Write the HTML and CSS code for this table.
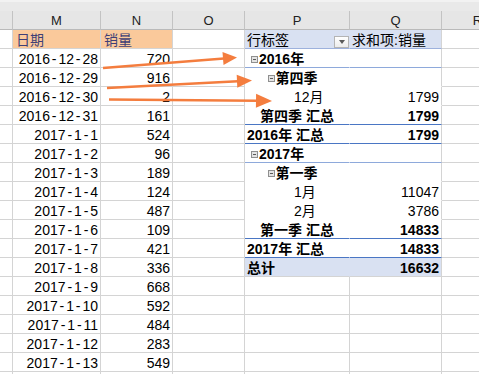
FILE: index.html
```html
<!DOCTYPE html>
<html lang="zh">
<head>
<meta charset="utf-8">
<title>数据透视表</title>
<link rel="stylesheet" href="styles.css">
</head>
<body>
<div class="sheet">
  <div class="top"></div>

  <div class="col"></div><div class="col">M</div><div class="col">N</div><div class="col">O</div><div class="col">P</div><div class="col">Q</div><div class="col">R</div>

  <div class="c"></div><div class="c in">日期</div><div class="c in">销量</div><div class="c"></div>
  <div class="c pp hdr flexcell"><span>行标签</span><span class="dd"><span class="tri"></span></span></div><div class="c pq hdr">求和项:销量</div><div class="c"></div>

  <div class="c"></div><div class="c r">2016<span class="h">-</span>12<span class="h">-</span>28</div><div class="c r">720</div><div class="c"></div>
  <div class="c pp l1 b lv1"><span class="ex"></span>2016年</div><div class="c pq l1"></div><div class="c"></div>

  <div class="c"></div><div class="c r">2016<span class="h">-</span>12<span class="h">-</span>29</div><div class="c r">916</div><div class="c"></div>
  <div class="c pp b lv2"><span class="ex"></span>第四季</div><div class="c pq"></div><div class="c"></div>

  <div class="c"></div><div class="c r">2016<span class="h">-</span>12<span class="h">-</span>30</div><div class="c r">2</div><div class="c"></div>
  <div class="c pp lv3">12月</div><div class="c pq r">1799</div><div class="c"></div>

  <div class="c"></div><div class="c r">2016<span class="h">-</span>12<span class="h">-</span>31</div><div class="c r">161</div><div class="c"></div>
  <div class="c pp l2 b lvq">第四季 汇总</div><div class="c pq l2 r b">1799</div><div class="c"></div>

  <div class="c"></div><div class="c r">2017<span class="h">-</span>1<span class="h">-</span>1</div><div class="c r">524</div><div class="c"></div>
  <div class="c pp l2 b">2016年 汇总</div><div class="c pq l2 r b">1799</div><div class="c"></div>

  <div class="c"></div><div class="c r">2017<span class="h">-</span>1<span class="h">-</span>2</div><div class="c r">96</div><div class="c"></div>
  <div class="c pp l1 b lv1"><span class="ex"></span>2017年</div><div class="c pq l1"></div><div class="c"></div>

  <div class="c"></div><div class="c r">2017<span class="h">-</span>1<span class="h">-</span>3</div><div class="c r">189</div><div class="c"></div>
  <div class="c pp b lv2"><span class="ex"></span>第一季</div><div class="c pq"></div><div class="c"></div>

  <div class="c"></div><div class="c r">2017<span class="h">-</span>1<span class="h">-</span>4</div><div class="c r">124</div><div class="c"></div>
  <div class="c pp lv3">1月</div><div class="c pq r">11047</div><div class="c"></div>

  <div class="c"></div><div class="c r">2017<span class="h">-</span>1<span class="h">-</span>5</div><div class="c r">487</div><div class="c"></div>
  <div class="c pp lv3">2月</div><div class="c pq r">3786</div><div class="c"></div>

  <div class="c"></div><div class="c r">2017<span class="h">-</span>1<span class="h">-</span>6</div><div class="c r">109</div><div class="c"></div>
  <div class="c pp l2 b lvq">第一季 汇总</div><div class="c pq l2 r b">14833</div><div class="c"></div>

  <div class="c"></div><div class="c r">2017<span class="h">-</span>1<span class="h">-</span>7</div><div class="c r">421</div><div class="c"></div>
  <div class="c pp l2 b">2017年 汇总</div><div class="c pq l2 r b">14833</div><div class="c"></div>

  <div class="c"></div><div class="c r">2017<span class="h">-</span>1<span class="h">-</span>8</div><div class="c r">336</div><div class="c"></div>
  <div class="c pp tot b">总计</div><div class="c pq tot r b">16632</div><div class="c"></div>

  <div class="c"></div><div class="c r">2017<span class="h">-</span>1<span class="h">-</span>9</div><div class="c r">668</div><div class="c"></div><div class="c"></div><div class="c"></div><div class="c"></div>
  <div class="c"></div><div class="c r">2017<span class="h">-</span>1<span class="h">-</span>10</div><div class="c r">592</div><div class="c"></div><div class="c"></div><div class="c"></div><div class="c"></div>
  <div class="c"></div><div class="c r">2017<span class="h">-</span>1<span class="h">-</span>11</div><div class="c r">484</div><div class="c"></div><div class="c"></div><div class="c"></div><div class="c"></div>
  <div class="c"></div><div class="c r">2017<span class="h">-</span>1<span class="h">-</span>12</div><div class="c r">283</div><div class="c"></div><div class="c"></div><div class="c"></div><div class="c"></div>
  <div class="c"></div><div class="c r">2017<span class="h">-</span>1<span class="h">-</span>13</div><div class="c r">549</div><div class="c"></div><div class="c"></div><div class="c"></div><div class="c"></div>
  <div class="c"></div><div class="c"></div><div class="c"></div><div class="c"></div><div class="c"></div><div class="c"></div><div class="c"></div>
</div>

<svg class="arrows" width="479" height="374" viewBox="0 0 479 374" aria-hidden="true">
  <g stroke="#f47d3e" stroke-width="2.5" fill="none" stroke-linecap="butt">
    <line x1="103" y1="68" x2="224" y2="58.6"/>
    <line x1="107" y1="88" x2="238" y2="81.3"/>
    <line x1="109" y1="99.5" x2="257" y2="100.85"/>
  </g>
  <g fill="#f47d3e">
    <polygon points="237,57.5 223.5,65.1 222.5,52.1"/>
    <polygon points="252,80.5 237.3,87.8 236.7,74.8"/>
    <polygon points="272,101 255.9,107.85 256.1,93.85"/>
  </g>
</svg>
</body>
</html>
```

FILE: styles.css
```css
* {
  box-sizing: border-box;
  margin: 0;
  padding: 0;
}

html, body {
  width: 479px;
  height: 374px;
  overflow: hidden;
  background: #fff;
}

body {
  position: relative;
  font-family: "Liberation Sans", "Noto Sans CJK SC", sans-serif;
  font-size: 14px;
  color: #000;
}

.sheet {
  display: grid;
  grid-template-columns: 13px 88px 72px 72px 105px 92px 72px;
  grid-template-rows: 11px 19px;
  grid-auto-rows: 19px;
}

.top {
  grid-column: 1 / -1;
  background: #e9e9e9;
  border-top: 2px solid #f2f2f2;
}

.col {
  background: #e6e6e6;
  border-right: 1px solid #c3c3c3;
  border-bottom: 1px solid #bababa;
  font-size: 13px;
  line-height: 20px;
  text-align: center;
  color: #222;
}

.c {
  border-right: 1px solid #d4d4d4;
  border-bottom: 1px solid #d4d4d4;
  line-height: 21px;
  white-space: nowrap;
  padding: 0 2px;
}

.r {
  text-align: right;
}

.b {
  font-weight: bold;
}

.h {
  margin: 0 1.9px;
}

.in {
  background: #fac99b;
  color: #3f3f76;
  padding-left: 3px;
}

/* pivot table */
.pp,
.pq {
  background: #fff;
  border-bottom-color: transparent;
}

.pp {
  border-right-color: transparent;
}

.hdr {
  background: #d9e1f2;
  border-bottom-color: #9db1dd;
}

.l1 {
  border-bottom-color: #8ea9db;
}

.l2 {
  border-bottom-color: #4a76c4;
}

.tot {
  background: #d9e1f2;
  border-bottom-color: #d4d4d4;
}

.flexcell {
  display: flex;
  justify-content: space-between;
  padding-right: 0;
}

.dd {
  align-self: flex-end;
  width: 15px;
  height: 12px;
  border: 1px solid #b4b4b4;
  background: linear-gradient(#ffffff, #ececec);
  display: flex;
  align-items: center;
  justify-content: center;
}

.tri {
  width: 0;
  height: 0;
  border-left: 3.5px solid transparent;
  border-right: 3.5px solid transparent;
  border-top: 4px solid #5a5a5a;
}

.ex {
  display: inline-block;
  width: 7px;
  height: 7px;
  border: 1px solid #8f8f8f;
  background: #e4e4e4 linear-gradient(#5a5a5a, #5a5a5a) no-repeat center / 3px 1px;
  vertical-align: 1px;
  margin-right: 1px;
}

.lv1 .ex {
  margin-left: 4px;
}

.lv2 .ex {
  margin-left: 20.5px;
}

.lv3 {
  padding-left: 49px;
}

.lvq {
  padding-left: 15px;
}

.arrows {
  position: absolute;
  left: 0;
  top: 0;
  pointer-events: none;
}
```
